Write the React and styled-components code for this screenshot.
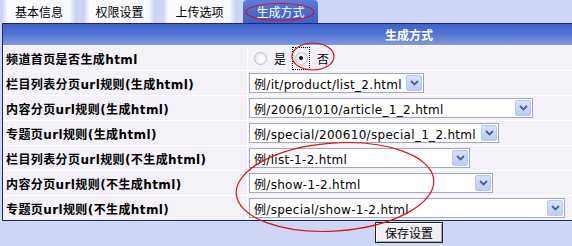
import React from 'react';
import styled, { createGlobalStyle } from 'styled-components';

const GlobalStyle = createGlobalStyle`
  html, body {
    margin: 0;
    padding: 0;
    background: #cdd6f6;
  }
  body {
    font-family: "DejaVu Sans", "Noto Sans CJK SC", sans-serif;
    font-size: 12px;
    color: #000;
  }
`;

const Page = styled.div`
  position: relative;
  width: 572px;
  height: 246px;
  overflow: hidden;
  padding-left: 2px;
  box-sizing: border-box;
`;

const TabBar = styled.div`
  display: flex;
  gap: 6px;
  height: 23px;
  margin-left: -1px;
`;

const Tab = styled.div`
  width: ${props => props.width || '75px'};
  height: 23px;
  display: flex;
  align-items: center;
  justify-content: center;
  border-radius: 4px 4px 0 0;
  font-family: "Noto Sans CJK SC", sans-serif;
  font-size: 12px;
  color: ${props => (props.active ? '#fff' : '#000')};
  background: ${props =>
    props.active
      ? 'linear-gradient(to bottom, #5b7edb, #4368cf 60%, #3d61c8)'
      : 'linear-gradient(to right, #c3cdef, #fdfdff 9%, #f6f7fc 90%, #c3cdef)'};
`;

const Panel = styled.div`
  width: 812px;
  border: 1px solid #1b2a66;
  background: #f4f2f8;
`;

const PanelHeader = styled.div`
  height: 21px;
  display: flex;
  align-items: center;
  justify-content: center;
  font-family: "Noto Sans CJK SC", sans-serif;
  font-weight: bold;
  color: #fff;
  background: linear-gradient(to bottom, #3f62c8, #4f72d4 45%, #809ae2);
`;

const Row = styled.div`
  display: flex;
  height: 24px;
  border-top: 1px solid #fff;
`;

const Label = styled.div`
  width: 241px;
  padding-left: 3px;
  display: flex;
  align-items: center;
  border-right: 1px solid #fff;
  font-weight: bold;
  letter-spacing: 0.4px;
  white-space: nowrap;
`;

const Value = styled.div`
  flex: 1;
  display: flex;
  align-items: center;
  padding-left: 1px;
`;

const RadioGroup = styled.div`
  display: flex;
  align-items: center;
  height: 24px;
  padding-left: 5px;
  font-family: "Noto Sans CJK SC", sans-serif;
`;

const RadioBox = styled.span`
  display: flex;
  align-items: center;
  justify-content: center;
  width: 18px;
  height: 23px;
  margin-left: ${props => props.shift || '0'};
  border: 1px dotted ${props => (props.focused ? '#000' : 'transparent')};
  box-sizing: border-box;
`;

const Radio = styled.span`
  width: 11px;
  height: 11px;
  border-radius: 50%;
  border: 1px solid #b9bec6;
  background: radial-gradient(circle at 60% 60%, #fff, #e4e4ea);
  display: flex;
  align-items: center;
  justify-content: center;

  &::after {
    content: '';
    width: 4px;
    height: 4px;
    border-radius: 50%;
    background: ${props => (props.checked ? '#111' : 'transparent')};
  }
`;

const RadioText = styled.span`
  margin-left: ${props => props.gap || '7px'};
`;

const Select = styled.div`
  width: ${props => props.width}px;
  height: 20px;
  display: flex;
  align-items: stretch;
  border: 1px solid #a2a9b8;
  box-sizing: border-box;
  background: #fff;
`;

const SelectText = styled.div`
  flex: 1;
  display: flex;
  align-items: center;
  padding-left: 4px;
  font-size: 12px;
  letter-spacing: 0.3px;
  white-space: nowrap;
  overflow: hidden;
`;

const SelectArrow = styled.div`
  width: 16px;
  margin: 1px;
  display: flex;
  align-items: center;
  justify-content: center;
  border: 1px solid #b8c7ec;
  box-sizing: border-box;
  border-radius: 2px;
  background: linear-gradient(to bottom, #d6e1fd, #bccdf8);
`;

const Actions = styled.div`
  width: 814px;
  display: flex;
  justify-content: center;
  padding-top: 1px;
`;

const SaveButton = styled.button`
  width: 68px;
  height: 21px;
  padding: 0;
  font-family: "Noto Sans CJK SC", sans-serif;
  font-size: 12px;
  color: #000;
  background: #f1eef2;
  border: 1px solid #222;
  box-shadow: inset 1px 1px 0 #fff, inset -1px -1px 0 #a9a6ad;
`;

const Marks = styled.svg`
  position: absolute;
  left: 0;
  top: 0;
  pointer-events: none;
`;

const Chevron = () => (
  <svg width="9" height="6" viewBox="0 0 9 6">
    <polyline points="1,1 4.5,4.5 8,1" fill="none" stroke="#4d6185" strokeWidth="1.8" />
  </svg>
);

const tabs = [
  { name: '基本信息', width: '76px' },
  { name: '权限设置', width: '73px' },
  { name: '上传选项', width: '75px' },
  { name: '生成方式', width: '75px', active: true },
];

const rules = [
  { label: '栏目列表分页url规则(生成html)', value: '例/it/product/list_2.html', width: 175 },
  { label: '内容分页url规则(生成html)', value: '例/2006/1010/article_1_2.html', width: 284 },
  { label: '专题页url规则(生成html)', value: '例/special/200610/special_1_2.html', width: 250 },
  { label: '栏目列表分页url规则(不生成html)', value: '例/list-1-2.html', width: 221 },
  { label: '内容分页url规则(不生成html)', value: '例/show-1-2.html', width: 244 },
  { label: '专题页url规则(不生成html)', value: '例/special/show-1-2.html', width: 316 },
];

export default function App() {
  return (
    <Page>
      <GlobalStyle />
      <TabBar>
        {tabs.map(tab => (
          <Tab key={tab.name} width={tab.width} active={tab.active}>{tab.name}</Tab>
        ))}
      </TabBar>
      <Panel>
        <PanelHeader>生成方式</PanelHeader>
        <Row>
          <Label>频道首页是否生成html</Label>
          <Value>
            <RadioGroup>
              <Radio />
              <RadioText gap="7px">是</RadioText>
              <RadioBox shift="6px" focused><Radio checked /></RadioBox>
              <RadioText gap="7px">否</RadioText>
            </RadioGroup>
          </Value>
        </Row>
        {rules.map(rule => (
          <Row key={rule.label}>
            <Label>{rule.label}</Label>
            <Value>
              <Select width={rule.width}>
                <SelectText>{rule.value}</SelectText>
                <SelectArrow><Chevron /></SelectArrow>
              </Select>
            </Value>
          </Row>
        ))}
      </Panel>
      <Actions>
        <SaveButton type="button">保存设置</SaveButton>
      </Actions>
      <Marks width="572" height="246">
        <ellipse cx="280" cy="12" rx="34" ry="8.5" fill="none" stroke="#e01010" strokeWidth="1.2" />
        <ellipse cx="313" cy="56.5" rx="21" ry="13.5" fill="none" stroke="#e01010" strokeWidth="1.2" />
        <ellipse cx="335" cy="187" rx="99" ry="44" fill="none" stroke="#e01010" strokeWidth="1.2" transform="rotate(-4 335 187)" />
      </Marks>
    </Page>
  );
}
